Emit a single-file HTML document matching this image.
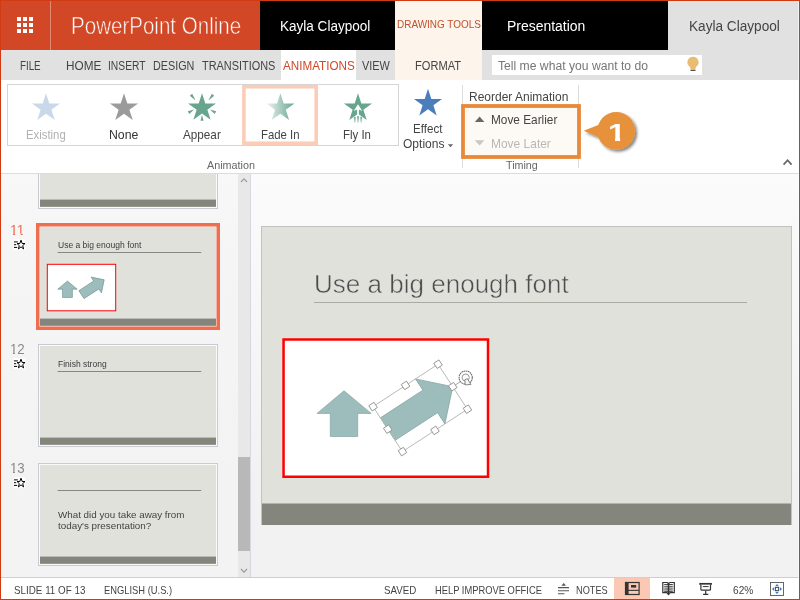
<!DOCTYPE html>
<html>
<head>
<meta charset="utf-8">
<title>PowerPoint Online</title>
<style>
html,body{margin:0;padding:0;}
body{width:800px;height:600px;position:relative;overflow:hidden;background:#fff;font-family:"Liberation Sans",sans-serif;color:#444;}
.a{position:absolute;}
.t{position:absolute;white-space:nowrap;line-height:1;transform-origin:0 0;}
#art{position:absolute;left:0;top:0;}
#frame{position:absolute;left:0;top:0;width:798px;height:598px;border:1px solid #d13a12;pointer-events:none;}
</style>
</head>
<body>
<!-- header blocks -->
<div class="a" style="left:0;top:0;width:260px;height:50px;background:#d24726;"></div>
<div class="a" style="left:50px;top:0;width:1px;height:50px;background:#e38a73;"></div>
<div class="a" style="left:260px;top:0;width:135px;height:50px;background:#000;"></div>
<div class="a" style="left:395px;top:0;width:87px;height:80px;background:#fdf5ec;"></div>
<div class="a" style="left:482px;top:0;width:186px;height:50px;background:#000;"></div>
<div class="a" style="left:668px;top:0;width:132px;height:50px;background:#e1e1e1;"></div>
<!-- tab bar -->
<div class="a" style="left:0;top:50px;width:395px;height:30px;background:#e1e1e1;"></div>
<div class="a" style="left:482px;top:50px;width:318px;height:30px;background:#e1e1e1;"></div>
<div class="a" style="left:280.5px;top:50px;width:75.5px;height:30px;background:#fff;"></div>
<div class="a" style="left:492px;top:55px;width:210px;height:19.6px;background:#fff;"></div>
<!-- ribbon -->
<div class="a" style="left:0;top:173px;width:800px;height:1px;background:#dcdcdc;"></div>
<div class="a" style="left:7px;top:84px;width:392px;height:62px;border:1px solid #d5d5d5;box-sizing:border-box;"></div>
<div class="a" style="left:462px;top:85px;width:1px;height:83px;background:#dcdcdc;"></div>
<div class="a" style="left:578px;top:85px;width:1px;height:83px;background:#dcdcdc;"></div>
<!-- panes -->
<div class="a" style="left:1px;top:174px;width:237px;height:403px;background:linear-gradient(#f8f8f8 0,#f5f5f5 80px,#f3f3f3 300px,#f3f3f3 100%);"></div>
<div class="a" style="left:238px;top:174px;width:12px;height:403px;background:#e8e8e8;"></div>
<div class="a" style="left:238px;top:456.7px;width:12px;height:94px;background:#b8b8b8;"></div>
<div class="a" style="left:250px;top:174px;width:1px;height:403px;background:#d5d8de;"></div>
<div class="a" style="left:251px;top:174px;width:548px;height:403px;background:linear-gradient(#fbfbfb 0,#f9f9f9 60px,#f2f2f2 300px,#f2f2f2 100%);"></div>
<!-- main slide -->
<div class="a" style="left:261px;top:226px;width:531px;height:299px;background:#e1e1dc;border:1px solid #c2c2c0;box-sizing:border-box;"></div>
<div class="a" style="left:262px;top:503px;width:529px;height:1px;background:#b4b4ae;"></div>
<div class="a" style="left:262px;top:504px;width:529px;height:20.5px;background:#84857d;"></div>
<div class="a" style="left:314px;top:302px;width:433px;height:1px;background:#a9aaa4;"></div>
<!-- status bar -->
<div class="a" style="left:1px;top:577px;width:798px;height:1px;background:#cbd0d8;"></div>
<div class="a" style="left:1px;top:578px;width:798px;height:21px;background:#fff;"></div>
<div class="a" style="left:614px;top:578px;width:36px;height:21px;background:#fbc9b3;"></div>
<svg id="art" width="800" height="600" viewBox="0 0 800 600">
<defs>
<linearGradient id="fade" x1="0" x2="1" y1="0" y2="0"><stop offset="0" stop-color="#67a58f" stop-opacity="0.12"/><stop offset="1" stop-color="#67a58f" stop-opacity="1"/></linearGradient>
<linearGradient id="bars" x1="0" x2="0" y1="0" y2="1"><stop offset="0" stop-color="#67a58f" stop-opacity="1"/><stop offset="1" stop-color="#67a58f" stop-opacity="0.25"/></linearGradient>
<filter id="sh" x="-30%" y="-30%" width="170%" height="170%"><feGaussianBlur in="SourceAlpha" stdDeviation="1.6"/><feOffset dx="1.6" dy="2"/><feComponentTransfer><feFuncA type="linear" slope="0.5"/></feComponentTransfer><feMerge><feMergeNode/><feMergeNode in="SourceGraphic"/></feMerge></filter>
<clipPath id="paneclip"><rect x="0" y="174" width="260" height="404"/></clipPath>
<g id="slideart">
<rect x="283.55" y="339.5" width="204.45" height="137.25" fill="#fff" stroke="#ff0000" stroke-width="2.5"/>
<polygon points="344,390.8 371.2,413.4 357.7,413.4 357.7,436.5 330.3,436.5 330.3,413.4 317,413.4" fill="#9dbdbc" stroke="#84a3a2" stroke-width="0.7"/>
<g transform="translate(420.25,407.9) rotate(-33.15)">
<polygon points="-38.8,-13.44 11.9,-13.44 11.9,-26.88 38.8,0 11.9,26.88 11.9,13.44 -38.8,13.44" fill="#9dbdbc" stroke="#84a3a2" stroke-width="0.7"/>
</g>
</g>
<g id="anim">
<rect x="0" y="0" width="11.4" height="10.8" fill="#fff"/>
<polygon points="7.2,0.9 8.4,4.2 11.2,4.2 8.9,6.3 9.8,9.6 7.2,7.6 4.6,9.6 5.5,6.3 3.2,4.2 6,4.2" fill="#fff" stroke="#000" stroke-width="1"/>
<path d="M0.2 2.6H4M0.2 5.4H2.4M0.2 8.1H3.4" stroke="#000" stroke-width="1" fill="none"/>
</g>
</defs>
<!-- waffle -->
<g fill="#fff"><rect x="17" y="17" width="4" height="4"/><rect x="23" y="17" width="4" height="4"/><rect x="29" y="17" width="4" height="4"/><rect x="17" y="23" width="4" height="4"/><rect x="23" y="23" width="4" height="4"/><rect x="29" y="23" width="4" height="4"/><rect x="17" y="29" width="4" height="4"/><rect x="23" y="29" width="4" height="4"/><rect x="29" y="29" width="4" height="4"/></g>
<!-- lightbulb -->
<path d="M693 56.8a5.5 5.5 0 0 0-3.5 9.8c.7.6 1 1.3 1 2.4h5c0-1.1.3-1.8 1-2.4A5.5 5.5 0 0 0 693 56.8z" fill="#e9bc73"/>
<rect x="690.5" y="69.6" width="5" height="1.4" fill="#555"/>
<!-- gallery selection -->
<rect x="243.9" y="86.75" width="72.3" height="56.5" fill="none" stroke="#fbcdb9" stroke-width="3.6"/>
<polygon points="46.00,93.20 49.32,103.43 60.08,103.43 51.38,109.75 54.70,119.97 46.00,113.65 37.30,119.97 40.62,109.75 31.92,103.43 42.68,103.43" fill="#c9d9ea"/>
<polygon points="124.00,93.20 127.32,103.43 138.08,103.43 129.38,109.75 132.70,119.97 124.00,113.65 115.30,119.97 118.62,109.75 109.92,103.43 120.68,103.43" fill="#9b9b9b"/>
<polygon points="202.00,93.35 205.29,103.47 215.93,103.47 207.32,109.73 210.61,119.85 202.00,113.60 193.39,119.85 196.68,109.73 188.07,103.47 198.71,103.47" fill="#67a58f"/>
<polygon points="189.82,95.73 192.18,93.87 195.60,100.60" fill="#67a58f"/>
<polygon points="211.82,93.87 214.18,95.73 208.40,100.60" fill="#67a58f"/>
<polygon points="189.36,113.89 187.84,111.31 194.00,109.40" fill="#67a58f"/>
<polygon points="216.16,111.31 214.64,113.89 210.00,109.40" fill="#67a58f"/>
<polygon points="203.50,120.80 200.50,120.80 202.00,114.80" fill="#67a58f"/>
<polygon points="280.40,93.20 283.72,103.43 294.48,103.43 285.78,109.75 289.10,119.97 280.40,113.65 271.70,119.97 275.02,109.75 266.32,103.43 277.08,103.43" fill="url(#fade)"/>
<polygon points="358.00,93.20 361.32,103.43 372.08,103.43 363.38,109.75 366.70,119.97 358.00,113.65 349.30,119.97 352.62,109.75 343.92,103.43 354.68,103.43" fill="#67a58f"/>
<polygon points="358,104.3 362.3,110.9 358.9,109.6 358.9,116.4 357.1,116.4 357.1,109.6 353.7,110.9" fill="#fff"/>
<rect x="353.9" y="116.8" width="1.8" height="5.9" fill="url(#bars)"/><rect x="357.1" y="116.2" width="1.8" height="6.5" fill="url(#bars)"/><rect x="360.3" y="116.8" width="1.8" height="5.9" fill="url(#bars)"/>
<polygon points="428.00,88.80 431.32,99.03 442.08,99.03 433.38,105.35 436.70,115.57 428.00,109.25 419.30,115.57 422.62,105.35 413.92,99.03 424.68,99.03" fill="#4a7ebb"/>
<!-- dropdown arrow -->
<polygon points="447.8,144.2 453.2,144.2 450.5,147.2" fill="#666"/>
<!-- orange highlight -->
<rect x="463" y="106" width="116" height="51" fill="#fdf9f5" stroke="#e8893a" stroke-width="3.8"/>
<polygon points="474.8,121.9 484.4,121.9 479.6,116.5" fill="#6a6764"/>
<polygon points="474.8,140.2 484.4,140.2 479.6,145.6" fill="#c9c7c5"/>
<!-- callout -->
<g filter="url(#sh)"><circle cx="616.2" cy="130.9" r="18.9" fill="#e8913a"/><polygon points="583.7,130.7 599.5,124.4 599.5,137.4" fill="#e8913a"/></g>
<!-- collapse chevron -->
<path d="M783.6 164.6L787.6 160.2L791.6 164.6" fill="none" stroke="#666" stroke-width="1.7"/>
<!-- scrollbar chevrons -->
<path d="M241 182L244 178.8L247 182" fill="none" stroke="#9a9a9a" stroke-width="1.1"/>
<path d="M241 569L244 572.2L247 569" fill="none" stroke="#9a9a9a" stroke-width="1.1"/>
<g clip-path="url(#paneclip)"><rect x="38.5" y="106.5" width="179" height="102" fill="#fafafa" stroke="#c9cbd3" stroke-width="1"/>
<rect x="40" y="108" width="176" height="99" fill="#e1e1dc"/></g>
<rect x="40" y="199.6" width="176" height="7.2" fill="#84857d"/>
<rect x="38.5" y="225.5" width="179" height="102" fill="#fafafa" stroke="#c9cbd3" stroke-width="1"/>
<rect x="40" y="227" width="176" height="99" fill="#e1e1dc"/>
<rect x="40" y="318.6" width="176" height="7.2" fill="#84857d"/>
<rect x="37.75" y="224.75" width="180.5" height="103.5" fill="none" stroke="#ee6e4f" stroke-width="3.5"/>
<rect x="57.6" y="252" width="143.6" height="0.9" fill="#7d7e79"/>
<use href="#anim" x="13.8" y="239.3"/>
<rect x="47.3" y="264.3" width="68.4" height="46.5" fill="#fff" stroke="#ff0000" stroke-width="1"/>
<g transform="translate(67.45,289.25) scale(0.358) translate(-344,-413.65)"><polygon points="344,390.8 371.2,413.4 357.7,413.4 357.7,436.5 330.3,436.5 330.3,413.4 317,413.4" fill="#9dbdbc" stroke="#6f8f8e" stroke-width="1.8"/></g>
<g transform="translate(91.55,287.6) scale(0.35) translate(-416.65,-409)"><g transform="translate(420.25,407.9) rotate(-33.15)"><polygon points="-38.8,-13.44 11.9,-13.44 11.9,-26.88 38.8,0 11.9,26.88 11.9,13.44 -38.8,13.44" fill="#9dbdbc" stroke="#6f8f8e" stroke-width="1.8"/></g></g>
<rect x="38.5" y="344.5" width="179" height="102" fill="#fafafa" stroke="#c9cbd3" stroke-width="1"/>
<rect x="40" y="346" width="176" height="99" fill="#e1e1dc"/>
<rect x="40" y="437.6" width="176" height="7.2" fill="#84857d"/>
<rect x="57.6" y="371" width="143.6" height="0.9" fill="#7d7e79"/>
<use href="#anim" x="13.8" y="358.3"/>
<rect x="38.5" y="463.5" width="179" height="102" fill="#fafafa" stroke="#c9cbd3" stroke-width="1"/>
<rect x="40" y="465" width="176" height="99" fill="#e1e1dc"/>
<rect x="40" y="556.6" width="176" height="7.2" fill="#84857d"/>
<rect x="57.6" y="490" width="143.6" height="0.9" fill="#7d7e79"/>
<use href="#anim" x="13.8" y="477.3"/>
<!-- main slide art -->
<use href="#slideart"/>
<g transform="translate(420.25,407.9) rotate(-33.15)" fill="#fff" stroke="#909090" stroke-width="0.85">
<rect x="-38.8" y="-26.88" width="77.6" height="53.76" fill="none" stroke="#b8b8b8" stroke-width="0.9"/>
<line x1="38.8" y1="0" x2="47.5" y2="0" stroke="#a0a0a0"/>
<rect x="-41.90" y="-29.98" width="6.2" height="6.2"/><rect x="-41.90" y="-3.10" width="6.2" height="6.2"/><rect x="-41.90" y="23.78" width="6.2" height="6.2"/><rect x="-3.10" y="-29.98" width="6.2" height="6.2"/><rect x="-3.10" y="23.78" width="6.2" height="6.2"/><rect x="35.70" y="-29.98" width="6.2" height="6.2"/><rect x="35.70" y="-3.10" width="6.2" height="6.2"/><rect x="35.70" y="23.78" width="6.2" height="6.2"/>
</g>
<g transform="translate(465.7,377.6)">
<circle r="6.6" fill="#fff" stroke="#6c6c6c" stroke-width="1.1" stroke-dasharray="1.7 0.5"/>
<circle r="3.6" fill="#fff" stroke="#8a8a8a" stroke-width="0.9"/>
<polygon points="-0.9,2.2 1.6,1 5.3,6.9 -0.5,7.3" fill="#f4f4f4" stroke="#7d7d7d" stroke-width="0.9"/>
</g>
<!-- status icons -->
<!-- notes -->
<polygon points="561.4,585.8 566,585.8 563.7,583" fill="#555"/>
<path d="M558 587.6H569M558 590.7H569M558 593.8H564.4" stroke="#555" stroke-width="1.1" fill="none"/>
<!-- normal view -->
<rect x="625.5" y="582.5" width="13.6" height="12" fill="#fbc9b3" stroke="#333" stroke-width="1.2"/>
<rect x="625" y="582" width="3.6" height="13" fill="#333"/>
<rect x="631" y="585" width="5.2" height="2.6" fill="#333"/>
<rect x="628" y="589.8" width="11" height="1.1" fill="#333"/>
<!-- reading view -->
<g stroke="#333" fill="none">
<path d="M662.8 582.5H667L668.5 583.6L670 582.5H674.3V592.6H670L668.5 594.6L667 592.6H662.8Z" fill="#fff" stroke-width="1.2"/>
<path d="M668.5 583.4V594.4" stroke-width="1.5"/>
<path d="M664.2 584.5H672.8M664.2 586.3H672.8M664.2 588.1H672.8M664.2 589.9H672.8M664.2 591.4H672.8" stroke-width="0.9"/>
</g>
<!-- slideshow -->
<g stroke="#333" fill="none">
<path d="M699.3 583.9H711.9" stroke-width="1.9"/>
<path d="M700.9 584.8V589.2Q700.9 590.2 701.9 590.2H709.5Q710.5 590.2 710.5 589.2V584.8" stroke-width="1.2" fill="#fff"/>
<path d="M702.8 586.6H708.6" stroke-width="1"/>
<path d="M705.7 590.4V594.2M703.1 594.4H708.3" stroke-width="1.2"/>
</g>
<!-- fit -->
<rect x="770.5" y="582.5" width="13" height="13" fill="#fff" stroke="#555" stroke-width="0.9"/>
<rect x="775.4" y="587.4" width="3.2" height="3.2" fill="none" stroke="#444" stroke-width="0.9"/>
<g fill="#2f7bd2"><polygon points="777,584 779,586.2 775,586.2"/><polygon points="777,594 779,591.8 775,591.8"/><polygon points="772,589 774.2,587 774.2,591"/><polygon points="782,589 779.8,587 779.8,591"/></g>
</svg>
<div class="t" style="left:71.12px;top:14.50px;font-size:23.4px;color:#fff;transform:scaleX(0.8784);-webkit-text-stroke:0.55px #d24726;">PowerPoint Online</div>
<div class="t" style="left:280.03px;top:19.00px;font-size:14px;color:#fff;transform:scaleX(0.9667);">Kayla Claypool</div>
<div class="t" style="left:396.60px;top:18.50px;font-size:10.6px;color:#c0502e;transform:scaleX(0.9396);">DRAWING TOOLS</div>
<div class="t" style="left:506.60px;top:19.00px;font-size:14px;color:#fff;transform:scaleX(0.9971);">Presentation</div>
<div class="t" style="left:689.03px;top:19.00px;font-size:14px;color:#444;transform:scaleX(0.9732);">Kayla Claypool</div>
<div class="t" style="left:20.02px;top:60.00px;font-size:12.5px;color:#444;transform:scaleX(0.7821);">FILE</div>
<div class="t" style="left:66.06px;top:60.00px;font-size:12.5px;color:#444;transform:scaleX(0.9402);">HOME</div>
<div class="t" style="left:107.68px;top:60.00px;font-size:12.5px;color:#444;transform:scaleX(0.8227);">INSERT</div>
<div class="t" style="left:152.64px;top:60.00px;font-size:12.5px;color:#444;transform:scaleX(0.8636);">DESIGN</div>
<div class="t" style="left:202.00px;top:60.00px;font-size:12.5px;color:#444;transform:scaleX(0.8722);">TRANSITIONS</div>
<div class="t" style="left:361.50px;top:60.00px;font-size:12.5px;color:#444;transform:scaleX(0.8710);">VIEW</div>
<div class="t" style="left:414.61px;top:60.00px;font-size:12.5px;color:#444;transform:scaleX(0.8885);">FORMAT</div>
<div class="t" style="left:282.50px;top:60.00px;font-size:12.5px;color:#d24726;transform:scaleX(0.9344);">ANIMATIONS</div>
<div class="t" style="left:498.00px;top:60.00px;font-size:12.5px;color:#767676;transform:scaleX(0.9722);">Tell me what you want to do</div>
<div class="t" style="left:25.90px;top:128.50px;font-size:12.6px;color:#b1b1b1;transform:scaleX(0.9004);">Existing</div>
<div class="t" style="left:108.62px;top:128.50px;font-size:12.6px;color:#333;transform:scaleX(0.9758);">None</div>
<div class="t" style="left:183.00px;top:128.50px;font-size:12.6px;color:#444;transform:scaleX(0.9303);">Appear</div>
<div class="t" style="left:260.90px;top:128.50px;font-size:12.6px;color:#444;transform:scaleX(0.9016);">Fade In</div>
<div class="t" style="left:343.49px;top:128.50px;font-size:12.6px;color:#444;transform:scaleX(0.9065);">Fly In</div>
<div class="t" style="left:413.08px;top:122.50px;font-size:12.6px;color:#444;transform:scaleX(0.9215);">Effect</div>
<div class="t" style="left:403.40px;top:137.50px;font-size:12.6px;color:#444;transform:scaleX(0.9558);">Options</div>
<div class="t" style="left:207.40px;top:159.50px;font-size:11.4px;color:#666;transform:scaleX(0.9460);">Animation</div>
<div class="t" style="left:505.50px;top:159.50px;font-size:11.4px;color:#666;transform:scaleX(0.9426);">Timing</div>
<div class="t" style="left:469.05px;top:90.50px;font-size:12.6px;color:#444;transform:scaleX(0.9520);">Reorder Animation</div>
<div class="t" style="left:490.86px;top:113.50px;font-size:12.6px;color:#444;transform:scaleX(0.9382);">Move Earlier</div>
<div class="t" style="left:490.85px;top:137.50px;font-size:12.6px;color:#b8b8b8;transform:scaleX(0.9498);">Move Later</div>
<div class="t" style="left:14.00px;top:583.50px;font-size:11.6px;color:#444;transform:scaleX(0.8477);">SLIDE 11 OF 13</div>
<div class="t" style="left:103.80px;top:583.50px;font-size:11.6px;color:#444;transform:scaleX(0.8068);">ENGLISH (U.S.)</div>
<div class="t" style="left:384.00px;top:583.50px;font-size:11.6px;color:#444;transform:scaleX(0.8405);">SAVED</div>
<div class="t" style="left:434.70px;top:583.50px;font-size:11.6px;color:#444;transform:scaleX(0.8069);">HELP IMPROVE OFFICE</div>
<div class="t" style="left:575.60px;top:583.50px;font-size:11.6px;color:#444;transform:scaleX(0.7934);">NOTES</div>
<div class="t" style="left:733.00px;top:583.50px;font-size:11.6px;color:#444;transform:scaleX(0.8735);">62%</div>
<div class="t" style="left:9.72px;top:223.00px;font-size:14px;color:#ee6e4f;transform:scaleX(0.9820);clip-path:polygon(0.00px -2.00px,16.57px -2.00px,16.57px 10.60px,12.94px 10.60px,12.94px 17.00px,10.91px 17.00px,10.91px 10.60px,5.16px 10.60px,5.16px 17.00px,3.12px 17.00px,3.12px 10.60px,0.00px 10.60px);">11</div>
<div class="t" style="left:9.55px;top:342.00px;font-size:14px;color:#8a8a8a;transform:scaleX(0.9468);clip-path:polygon(0.00px -2.00px,16.57px -2.00px,16.57px 17.00px,7.79px 17.00px,7.79px 10.60px,5.16px 10.60px,5.16px 17.00px,3.12px 17.00px,3.12px 10.60px,0.00px 10.60px);">12</div>
<div class="t" style="left:9.55px;top:461.00px;font-size:14px;color:#8a8a8a;transform:scaleX(0.9468);clip-path:polygon(0.00px -2.00px,16.57px -2.00px,16.57px 17.00px,7.79px 17.00px,7.79px 10.60px,5.16px 10.60px,5.16px 17.00px,3.12px 17.00px,3.12px 10.60px,0.00px 10.60px);">13</div>
<div class="t" style="left:57.70px;top:240.50px;font-size:8.8px;color:#3a3a3a;transform:scaleX(0.9684);">Use a big enough font</div>
<div class="t" style="left:57.70px;top:359.50px;font-size:8.8px;color:#3a3a3a;transform:scaleX(0.9650);">Finish strong</div>
<div class="t" style="left:57.90px;top:509.50px;font-size:9.6px;color:#444;transform:scaleX(1.0225);">What did you take away from</div>
<div class="t" style="left:57.90px;top:520.50px;font-size:9.6px;color:#444;transform:scaleX(1.0258);">today's presentation?</div>
<div class="t" style="left:313.50px;top:271.00px;font-size:26px;color:#4d4d4d;transform:scaleX(1.0012);-webkit-text-stroke:0.5px #e1e1dc;">Use a big enough font</div>
<div class="t" style="left:608.48px;top:121.15px;font-size:24.7px;color:#fff;font-weight:bold;transform:scaleX(1.28);clip-path:polygon(0 0,100% 0,100% 16.63px,9.45px 16.63px,9.45px 100%,5.46px 100%,5.46px 16.63px,0 16.63px);">1</div>
<div class="a" style="left:798px;top:1px;width:1px;height:598px;background:rgba(255,255,255,.55);"></div>
<div id="frame"></div>
</body>
</html>
